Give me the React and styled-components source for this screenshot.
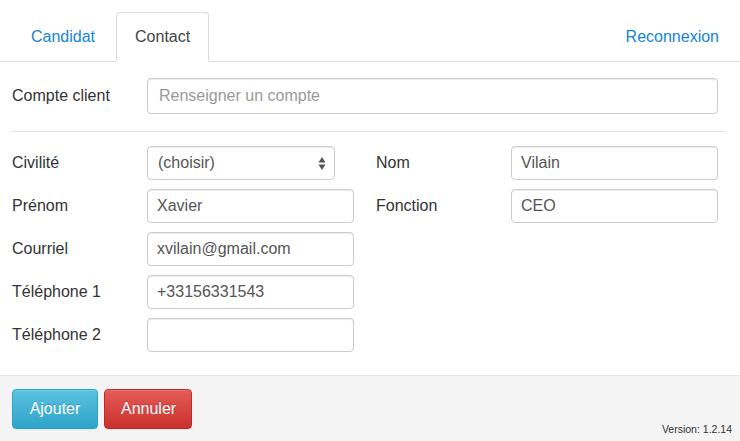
import React from "react";
import styled, { createGlobalStyle } from "styled-components";

const Global = createGlobalStyle`
  html, body { margin: 0; padding: 0; background: #fff; }
  body { font-family: "Liberation Sans", Arial, Helvetica, sans-serif; color: #333; }
  * { box-sizing: border-box; }
`;

const Page = styled.div`
  width: 740px;
  height: 441px;
  display: flex;
  flex-direction: column;
  background: #fff;
  overflow: hidden;
`;

const Nav = styled.div`
  display: flex;
  align-items: flex-end;
  margin-top: 12px;
  padding-left: 12px;
  border-bottom: 1px solid #ddd;
  height: 50px;
`;

const Tab = styled.a`
  display: block;
  padding: 13px 18px 13px;
  margin-right: 2px;
  margin-bottom: -1px;
  line-height: 22px;
  font-size: 16px;
  border: 1px solid ${(p) => (p.$active ? "#ddd" : "transparent")};
  border-bottom-color: ${(p) => (p.$active ? "#fff" : "transparent")};
  border-radius: 4px 4px 0 0;
  background: ${(p) => (p.$active ? "#fff" : "transparent")};
  color: ${(p) => (p.$active ? "#444" : "#1685d3")};
  cursor: pointer;
  text-decoration: none;
  margin-left: ${(p) => (p.$right ? "auto" : "0")};
`;

const Body = styled.div`
  flex: 1;
  padding: 16px 0 0 12px;
`;

const Row = styled.div`
  display: grid;
  grid-template-columns: 135px 571px;
  align-items: center;
`;

const Label = styled.label`
  font-size: 16px;
  color: #333;
  line-height: 20px;
  padding-left: ${(p) => (p.$indent ? "22px" : "0")};
`;

const Input = styled.input`
  width: 100%;
  height: ${(p) => (p.$large ? "36px" : "34px")};
  border: 1px solid #ccc;
  border-radius: 4px;
  padding: 0 ${(p) => (p.$large ? "11px" : "9px")};
  font-family: "Liberation Sans", Arial, Helvetica, sans-serif;
  font-size: 16px;
  color: #555;
  background: #fff;
  box-shadow: inset 0 1px 1px rgba(0, 0, 0, 0.075);
  outline: none;
  &::placeholder { color: #999; }
`;

const Divider = styled.hr`
  border: 0;
  border-top: 1px solid #e2e2e2;
  margin: 17px 14px 14px 0;
`;

const Grid = styled.div`
  display: grid;
  grid-template-columns: 135px 207px 157px 207px;
  row-gap: 9px;
  align-items: center;
`;

const Spacer = styled.div`
  grid-column: span 2;
  height: 34px;
`;

const SelectBox = styled.div`
  position: relative;
  width: 188px;
  height: 34px;
  border: 1px solid #ccc;
  border-radius: 4px;
  box-shadow: inset 0 1px 1px rgba(0, 0, 0, 0.075);
  display: flex;
  align-items: center;
  padding: 0 10px;
  font-size: 16px;
  color: #555;
  background: #fff;
`;

const Arrows = styled.svg`
  position: absolute;
  right: 8px;
  top: 9px;
`;

const Footer = styled.div`
  height: 66px;
  background: #f4f4f4;
  border-top: 1px solid #e6e6e6;
  display: flex;
  align-items: flex-start;
  padding: 13px 8px 0 12px;
  position: relative;
`;

const Button = styled.button`
  height: 40px;
  padding: 0 16px;
  margin-right: 6px;
  font-family: "Liberation Sans", Arial, Helvetica, sans-serif;
  font-size: 16px;
  color: #fff;
  border-radius: 4px;
  text-shadow: 0 -1px 0 rgba(0, 0, 0, 0.2);
  box-shadow: inset 0 1px 0 rgba(255, 255, 255, 0.15), 0 1px 1px rgba(0, 0, 0, 0.075);
  cursor: pointer;
  border: 1px solid ${(p) => (p.$variant === "danger" ? "#b92c28" : "#28a4c9")};
  background: ${(p) =>
    p.$variant === "danger"
      ? "linear-gradient(to bottom, #e65c58 0%, #c9302c 100%)"
      : "linear-gradient(to bottom, #5cc3e1 0%, #2ea3c9 100%)"};
  width: ${(p) => p.$w}px;
`;

const Version = styled.div`
  position: absolute;
  right: 8px;
  bottom: 6px;
  font-size: 10.5px;
  color: #333;
`;

export default function App() {
  return (
    <>
      <Global />
      <Page>
        <Nav>
          <Tab>Candidat</Tab>
          <Tab $active>Contact</Tab>
          <Tab $right>Reconnexion</Tab>
        </Nav>
        <Body>
          <Row>
            <Label>Compte client</Label>
            <Input $large placeholder="Renseigner un compte" />
          </Row>
          <Divider />
          <Grid>
            <Label>Civilité</Label>
            <SelectBox>
              (choisir)
              <Arrows width="8" height="15" viewBox="0 0 8 15">
                <path d="M4 1 L7.5 6.5 L0.5 6.5 Z" fill="#555" />
                <path d="M4 14 L7.5 8.5 L0.5 8.5 Z" fill="#555" />
              </Arrows>
            </SelectBox>
            <Label $indent>Nom</Label>
            <Input defaultValue="Vilain" />

            <Label>Prénom</Label>
            <Input defaultValue="Xavier" />
            <Label $indent>Fonction</Label>
            <Input defaultValue="CEO" />

            <Label>Courriel</Label>
            <Input defaultValue="xvilain@gmail.com" />
            <Spacer />

            <Label>Téléphone 1</Label>
            <Input defaultValue="+33156331543" />
            <Spacer />

            <Label>Téléphone 2</Label>
            <Input defaultValue="" />
            <Spacer />
          </Grid>
        </Body>
        <Footer>
          <Button $w={86}>Ajouter</Button>
          <Button $variant="danger" $w={88}>Annuler</Button>
          <Version>Version: 1.2.14</Version>
        </Footer>
      </Page>
    </>
  );
}
